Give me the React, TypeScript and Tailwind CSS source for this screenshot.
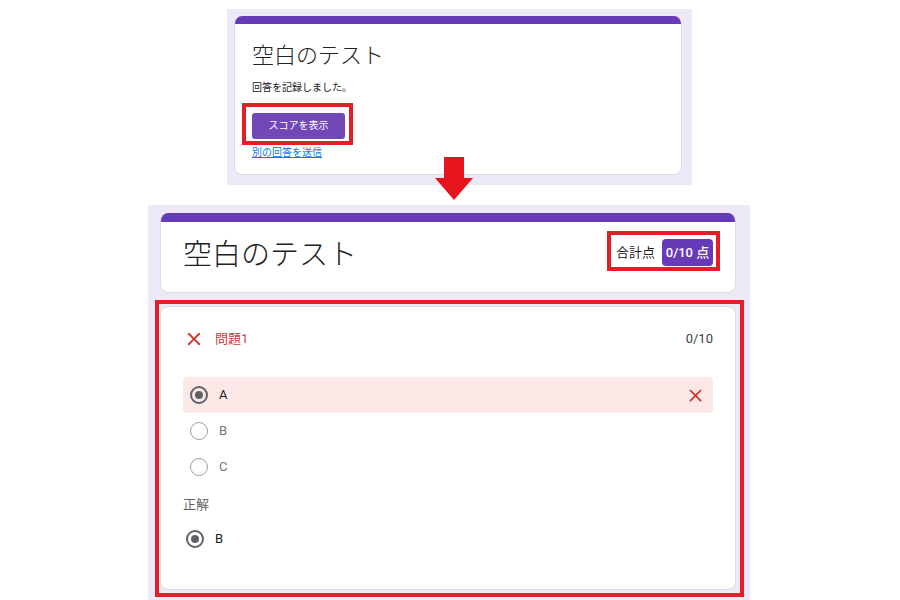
import React from "react";

const font = "font-['Roboto','Noto_Sans_CJK_JP',sans-serif]";

function CloseIcon({ className }: { className?: string }) {
  return (
    <svg viewBox="0 0 24 24" className={className} aria-hidden="true">
      <path
        fill="currentColor"
        d="M19 6.41 17.59 5 12 10.59 6.41 5 5 6.41 10.59 12 5 17.59 6.41 19 12 13.41 17.59 19 19 17.59 13.41 12z"
      />
    </svg>
  );
}

function Radio({ checked }: { checked?: boolean }) {
  if (checked) {
    return (
      <span className="grid size-[18px] shrink-0 place-items-center rounded-full border-2 border-[#5f6368]">
        <span className="size-[8px] rounded-full bg-[#5f6368]" />
      </span>
    );
  }
  return <span className="size-[18px] shrink-0 rounded-full border-[1.5px] border-[#9aa0a6]" />;
}

function Callout({ className }: { className: string }) {
  return <span className={`pointer-events-none absolute border-4 border-[#e41e26] ${className}`} />;
}

const options = [
  { label: "A", picked: true },
  { label: "B", picked: false },
  { label: "C", picked: false }
];

export default function App() {
  return (
    <div className={`relative flex h-[600px] w-[900px] flex-col overflow-hidden bg-white ${font}`}>
      {/* before: confirmation page */}
      <div className="ml-[227px] mt-[9px] h-[176px] w-[465px] bg-[#ede9f6] pl-[7px] pt-[7px]">
        <div className="h-[159px] w-[448px] overflow-hidden rounded-lg border-x border-b border-[#dadce0] bg-white">
          <div className="h-[8px] bg-[#673ab7]" />
          <div className="flex flex-col items-start px-[17px]">
            <h1 className="mt-[18px] text-[22px] font-light leading-[28px] text-[#202124]">空白のテスト</h1>
            <p className="mt-[11px] text-[10px] leading-[14px] text-[#202124]">回答を記録しました。</p>
            <div className="relative mt-[17px]">
              <button className="h-[26px] w-[93px] rounded-[3px] bg-[#7248b9] text-[10px] text-white">
                スコアを表示
              </button>
              <Callout className="-bottom-[6px] -left-[10px] -right-[8px] -top-[9px]" />
            </div>
            <a className="mt-[7px] text-[10px] leading-[14px] text-[#1a73e8] underline">別の回答を送信</a>
          </div>
        </div>
      </div>

      <svg viewBox="0 0 38 43" className="absolute left-[435px] top-[157px] h-[43px] w-[38px]" aria-hidden="true">
        <polygon points="9,0 29,0 29,21 38,21 19,43 0,21 9,21" fill="#e8141e" />
      </svg>

      {/* after: score view */}
      <div className="ml-[148px] mt-[20px] flex h-[395px] w-[602px] flex-col gap-[13px] bg-[#ede9f6] pl-[12px] pt-[8px]">
        <div className="h-[80px] w-[576px] overflow-hidden rounded-lg border-x border-b border-[#dadce0] bg-white">
          <div className="h-[9px] bg-[#673ab7]" />
          <div className="flex h-[66px] items-center justify-between px-[22px]">
            <h2 className="text-[29px] font-light leading-none text-[#202124]">空白のテスト</h2>
            <div className="relative mb-[5px] flex items-center gap-[7px]">
              <span className="text-[13px] text-[#202124]">合計点</span>
              <span className="flex h-[27px] w-[51px] items-center justify-center rounded-[4px] bg-[#673ab7] text-[13px] font-medium text-white">
                0/10 点
              </span>
              <Callout className="-bottom-[5px] -left-[9px] -right-[7px] -top-[8px]" />
            </div>
          </div>
        </div>

        <div className="relative h-[284px] w-[576px] rounded-lg border border-[#dadce0] bg-white px-[22px] pt-[21px]">
          <div className="flex h-[22px] items-center">
            <CloseIcon className="size-[22px] text-[#c8362e]" />
            <span className="ml-[10px] text-[13px] text-[#c0453d]">問題1</span>
            <span className="ml-auto text-[13px] text-[#3c4043]">0/10</span>
          </div>

          <div className="mt-[27px] flex flex-col">
            {options.map((o) => (
              <div
                key={o.label}
                className={`flex h-[36px] items-center gap-[11px] rounded px-[7px] ${o.picked ? "bg-[#fce8e6]" : ""}`}
              >
                <Radio checked={o.picked} />
                <span className={`text-[13px] ${o.picked ? "text-[#202124]" : "text-[#70757a]"}`}>{o.label}</span>
                {o.picked && <CloseIcon className="ml-auto size-[21px] text-[#d93025]" />}
              </div>
            ))}
          </div>

          <p className="mt-[10px] text-[13px] leading-[20px] text-[#5f6368]">正解</p>
          <div className="mt-[6px] flex h-[36px] items-center gap-[11px] pl-[3px]">
            <Radio checked />
            <span className="text-[13px] text-[#202124]">B</span>
          </div>

          <Callout className="-bottom-[8px] -left-[6px] -right-[9px] -top-[7px]" />
        </div>
      </div>
    </div>
  );
}
